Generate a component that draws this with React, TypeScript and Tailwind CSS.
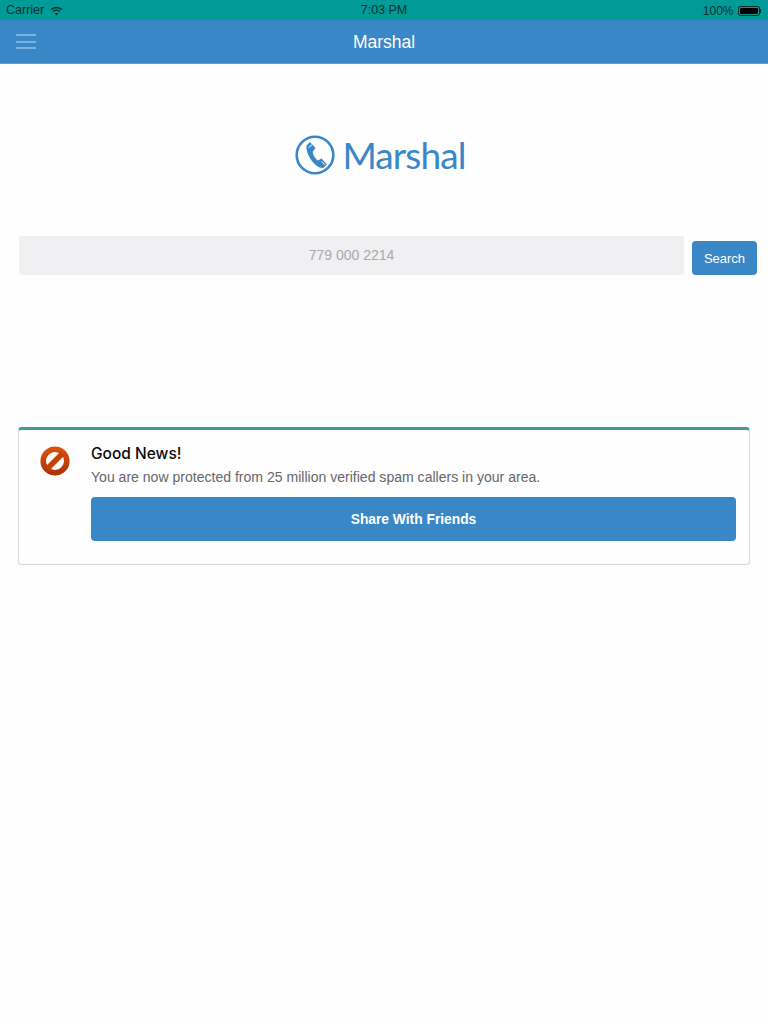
const sans = "font-['Liberation_Sans',Arial,sans-serif]";

function WifiIcon() {
  return (
    <svg width="13" height="10" viewBox="0 0 12 10" className="ml-[6px]">
      <path d="M0.8 3.6 A7.4 7.4 0 0 1 11.2 3.6" fill="none" stroke="#06302f" strokeWidth="1.4" />
      <path d="M2.8 5.6 A4.6 4.6 0 0 1 9.2 5.6" fill="none" stroke="#06302f" strokeWidth="1.4" />
      <path d="M6 9.6 L4.4 7.5 A2.4 2.4 0 0 1 7.6 7.5 Z" fill="#06302f" />
    </svg>
  );
}

function BatteryIcon() {
  return (
    <div className="flex items-center">
      <div className="w-[22px] h-[10px] border border-[#06302f] rounded-[2px] p-[1px]">
        <div className="w-full h-full bg-black rounded-[1px]" />
      </div>
      <div className="w-[1.5px] h-[4px] bg-[#06302f]" />
    </div>
  );
}

function PhoneLogo() {
  return (
    <svg width="40" height="40" viewBox="0 0 40 40">
      <circle cx="20" cy="20" r="18.3" fill="none" stroke="#3a87c8" strokeWidth="2.6" />
      <path
        d="M15 7 L20.5 13 L17.8 16.5 C17.6 19 20 23.5 23 25.5 L26.5 23.5 L32 29.5 L28 33 C20.5 33.5 10.5 20 11.5 10.5 Z"
        fill="#3a87c8"
      />
      <path d="M17.2 9.6 L13.6 12.6 M29.8 29.8 L26.8 26.4" stroke="#fefefe" strokeWidth="1" />
    </svg>
  );
}

function NoEntryIcon() {
  return (
    <svg width="30" height="30" viewBox="0 0 30 30">
      <defs>
        <linearGradient id="ring" x1="0" y1="0" x2="0" y2="1">
          <stop offset="0" stopColor="#d9510f" />
          <stop offset="1" stopColor="#ad3406" />
        </linearGradient>
      </defs>
      <circle cx="15" cy="15" r="11.8" fill="#fefefe" stroke="url(#ring)" strokeWidth="5.6" />
      <path d="M7.5 22.5 L22.5 7.5" stroke="#c2430a" strokeWidth="5.4" />
    </svg>
  );
}

export default function App() {
  return (
    <div className={`${sans} min-h-[1024px] bg-[#fefefe] flex flex-col`}>
      {/* Status bar */}
      <div className="h-5 bg-[#009b97] px-[6px] pt-[1px] grid grid-cols-3 items-center text-[12.5px] text-[#06302f]">
        <div className="flex items-center">
          Carrier
          <WifiIcon />
        </div>
        <div className="text-center">7:03 PM</div>
        <div className="flex items-center justify-end gap-[4px] pr-[1px] text-[12px]">
          100%
          <BatteryIcon />
        </div>
      </div>

      {/* Nav bar */}
      <div className="relative h-[44px] pt-[1px] bg-[#3a87c8] border-b border-[#6f9cc4] flex items-center justify-center">
        <div className="absolute left-4 top-[14px] w-5 flex flex-col gap-[4.5px]">
          <div className="h-[2px] bg-[#79b2e0]" />
          <div className="h-[2px] bg-[#79b2e0]" />
          <div className="h-[2px] bg-[#79b2e0]" />
        </div>
        <span className="text-white text-[17.5px] font-medium">Marshal</span>
      </div>

      {/* Logo */}
      <div className="mt-[71px] flex items-center justify-center gap-[7px] pr-[7px] h-[40px]">
        <PhoneLogo />
        <span className="font-['Lato',sans-serif] text-[37px] leading-none text-[#3a87c8] tracking-[-0.9px] mb-[2px]">
          Marshal
        </span>
      </div>

      {/* Search */}
      <div className="mt-[61px] pl-[19px] pr-[11px] flex items-end gap-2">
        <div className="flex-1 h-[39px] bg-[#f0eff1] rounded-[3px] flex items-center justify-center text-[14px] text-[#a9a9ad]">
          779 000 2214
        </div>
        <button className="w-[65px] h-[34px] bg-[#3a87c8] rounded-[4px] text-white text-[13px] pt-[1px]">Search</button>
      </div>

      {/* Good news card */}
      <div className="mt-[152px] ml-[18px] w-[732px] h-[138px] rounded-[4px] border border-[#d8d8da] border-t-[3px] border-t-[#3f9a8c] bg-[#fefefe] flex">
        <div className="w-[72px] pl-[20.5px] pt-[16px]">
          <NoEntryIcon />
        </div>
        <div className="flex-1 pr-[13px] pt-[15px]">
          <div className="font-['Inter',sans-serif] text-[15.5px] leading-[18px] font-medium text-[#0c0c0c]">Good News!</div>
          <p className="mt-[6px] text-[14.05px] leading-[17px] text-[#66666a]">
            You are now protected from 25 million verified spam callers in your area.
          </p>
          <button className="mt-[11px] w-full h-[44px] bg-[#3a87c8] rounded-[4px] text-white text-[13.8px] font-bold pt-[3px]">
            Share With Friends
          </button>
        </div>
      </div>
    </div>
  );
}
